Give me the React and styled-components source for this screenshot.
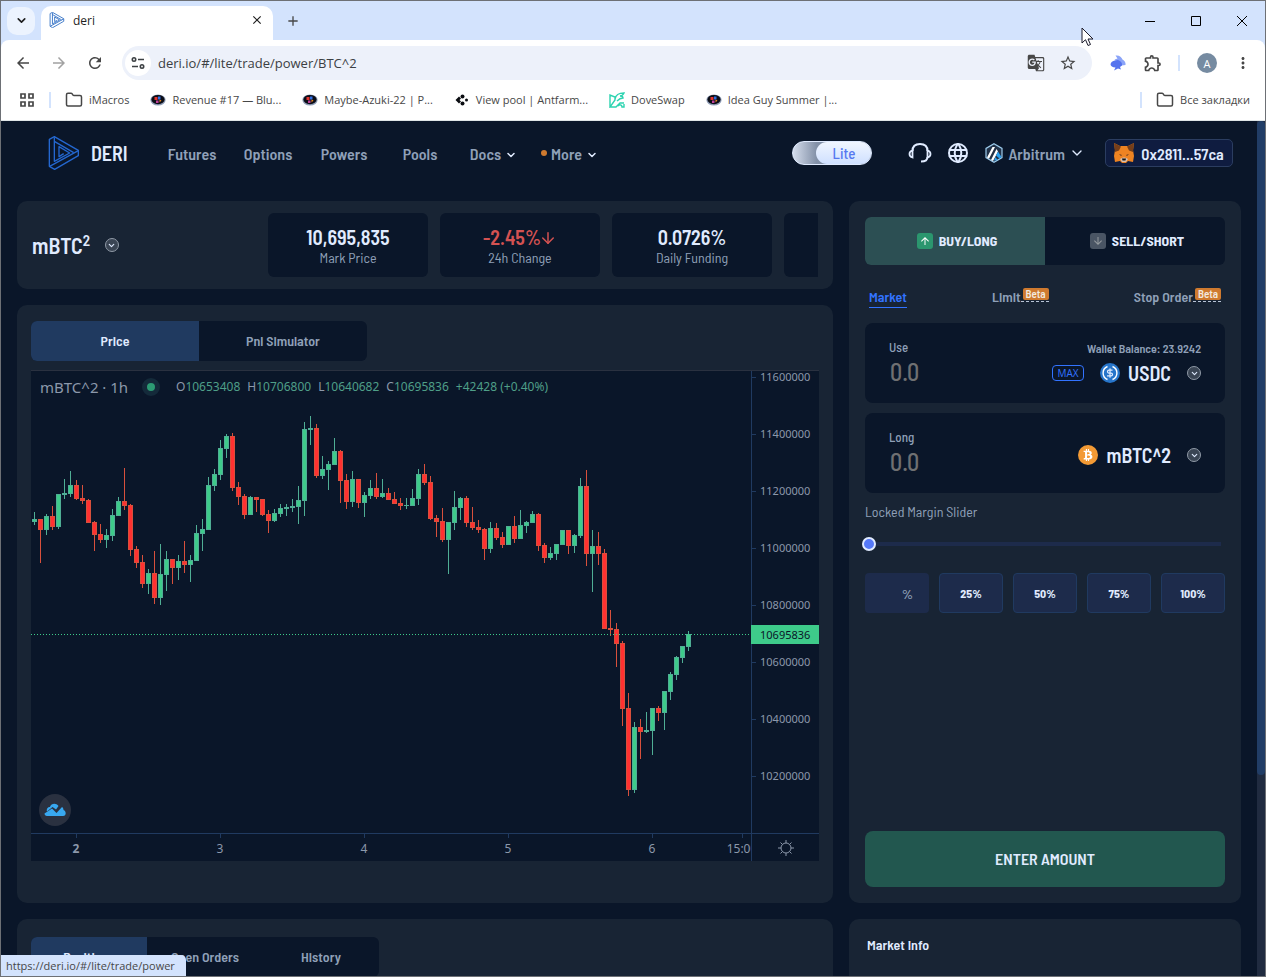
import React, { useState } from 'react'
import styled, { createGlobalStyle } from 'styled-components'
import {
  MdArrowBack, MdArrowForward, MdArrowUpward, MdArrowDownward, MdRefresh, MdStarBorder, MdGTranslate,
  MdOutlineExtension, MdMoreVert, MdClose, MdAdd,
} from 'react-icons/md'
import { TbWorld } from 'react-icons/tb'
import { FaBtc } from 'react-icons/fa'
import { ArrowDown, ChevronDown, Folder, DollarSign } from 'lucide-react'

const GlobalStyle = createGlobalStyle`
  *, *::before, *::after { box-sizing: border-box; }
  body { margin: 0; background: #0a1629; }
  button, input { font: inherit; color: inherit; }
  button { padding: 0; border: 0; background: none; cursor: pointer; }
  a { color: inherit; text-decoration: none; }
  svg { display: block; flex: none; }
`

const uiFont = '"Segoe UI", "Open Sans", "Noto Sans", sans-serif'
const appFont = '"Barlow Semi Condensed", "Roboto Condensed", "Liberation Sans Narrow", Roboto, sans-serif'
const chartFont = '"Trebuchet MS", "Noto Sans", sans-serif'

// direction, high, body top, body bottom, low - measured from the top of the plot
const candles = [
  ['u', 142, 149, 152, 155], ['d', 149, 149, 160, 193], ['u', 144, 146, 160, 165], ['d', 136, 146, 157, 160],
  ['u', 124, 124, 157, 159], ['u', 109, 123, 125, 129], ['u', 101, 115, 124, 127], ['d', 110, 115, 129, 130],
  ['d', 115, 128, 131, 134], ['d', 129, 130, 153, 153], ['d', 151, 152, 165, 181], ['d', 154, 164, 170, 173],
  ['u', 159, 165, 170, 178], ['u', 139, 145, 166, 171], ['u', 127, 131, 146, 146], ['d', 98, 131, 136, 140],
  ['d', 134, 135, 180, 186], ['d', 176, 179, 193, 198], ['d', 185, 192, 214, 218], ['u', 199, 203, 214, 224],
  ['d', 181, 203, 228, 234], ['u', 174, 204, 228, 235], ['u', 181, 189, 205, 221], ['d', 189, 189, 198, 214],
  ['u', 185, 191, 198, 210], ['d', 171, 191, 195, 203], ['u', 185, 190, 195, 212], ['u', 155, 163, 191, 191],
  ['u', 149, 159, 164, 181], ['u', 107, 115, 160, 160], ['u', 99, 104, 116, 121], ['u', 70, 78, 105, 110],
  ['u', 64, 66, 79, 88], ['d', 63, 66, 118, 121], ['d', 112, 117, 127, 135], ['d', 124, 126, 145, 149],
  ['u', 126, 127, 145, 145], ['d', 127, 127, 130, 142], ['d', 129, 129, 145, 146], ['d', 140, 144, 151, 163],
  ['u', 139, 143, 151, 152], ['u', 134, 138, 144, 147], ['u', 134, 137, 139, 146], ['u', 129, 136, 138, 142],
  ['u', 116, 130, 137, 154], ['u', 52, 59, 131, 146], ['u', 46, 58, 60, 75], ['d', 54, 58, 106, 108],
  ['u', 86, 99, 106, 109], ['u', 91, 94, 100, 120], ['u', 68, 81, 95, 95], ['d', 80, 81, 111, 133],
  ['d', 104, 110, 132, 139], ['u', 101, 109, 132, 137], ['d', 109, 109, 133, 138], ['u', 122, 125, 133, 147],
  ['u', 110, 118, 126, 129], ['d', 103, 118, 127, 129], ['u', 109, 123, 127, 128], ['d', 118, 123, 130, 130],
  ['d', 122, 129, 134, 134], ['d', 128, 133, 136, 140], ['u', 128, 135, 136, 139], ['u', 119, 128, 136, 136],
  ['u', 99, 104, 129, 135], ['d', 94, 104, 113, 115], ['d', 106, 112, 149, 150], ['d', 145, 148, 152, 167],
  ['d', 138, 151, 170, 172], ['u', 152, 152, 170, 204], ['u', 121, 137, 153, 160], ['u', 127, 128, 138, 150],
  ['d', 126, 128, 153, 157], ['d', 137, 152, 158, 160], ['d', 150, 157, 160, 163], ['d', 158, 159, 179, 190],
  ['u', 152, 158, 179, 183], ['d', 153, 158, 168, 170], ['d', 162, 167, 175, 178], ['u', 156, 156, 175, 175],
  ['d', 146, 156, 169, 173], ['u', 140, 155, 169, 169], ['u', 151, 152, 156, 163], ['u', 141, 144, 153, 153],
  ['d', 143, 144, 176, 181], ['d', 173, 175, 188, 193], ['u', 177, 183, 188, 190], ['u', 174, 174, 184, 190],
  ['u', 160, 160, 175, 175], ['d', 160, 160, 176, 184], ['u', 164, 165, 176, 183], ['u', 108, 116, 166, 168],
  ['d', 100, 116, 184, 196], ['u', 160, 176, 184, 222], ['d', 162, 176, 184, 195], ['d', 179, 183, 259, 259],
  ['d', 240, 258, 260, 266], ['d', 253, 259, 274, 297], ['d', 271, 273, 339, 356], ['d', 323, 338, 420, 426],
  ['u', 352, 357, 420, 423], ['d', 349, 357, 362, 389], ['u', 342, 360, 362, 363], ['u', 338, 338, 361, 385],
  ['d', 336, 338, 343, 351], ['u', 321, 321, 343, 360], ['u', 302, 304, 322, 330], ['u', 286, 287, 305, 310],
  ['u', 276, 276, 288, 293], ['u', 261, 264, 277, 281],
]

const prices = [11600000, 11400000, 11200000, 11000000, 10800000, 10600000, 10400000, 10200000]
const days = ['2', '3', '4', '5', '6']
const navLinks = ['Futures', 'Options', 'Powers', 'Pools']
const stats = [
  { value: '10,695,835', label: 'Mark Price' },
  { value: '-2.45%', label: '24h Change', down: true },
  { value: '0.0726%', label: 'Daily Funding' },
  { value: '', label: '' },
]
const bookmarks = [
  { icon: 'folder', text: 'iMacros' },
  { icon: 'eye', text: 'Revenue #17 — Blu...' },
  { icon: 'eye', text: 'Maybe-Azuki-22 | P...' },
  { icon: 'ant', text: 'View pool | Antfarm...' },
  { icon: 'dove', text: 'DoveSwap' },
  { icon: 'eye', text: 'Idea Guy Summer |...' },
]

/* ---------- icons ---------- */

const DeriLogo = ({ size, color, stroke = 4 }) => (
  <svg width={size} height={size} viewBox="0 0 102 102" fill="none" stroke={color} strokeWidth={stroke} strokeLinejoin="round">
    <path d="M7 10 L22 2 L94 43 V59 L23 100 L7 91 Z" />
    <path d="M22 4 V76 L68 51 L36 32 V62 L50 53" />
    <path d="M8 91 L94 44" />
    <path d="M22 16 L80 50" />
  </svg>
)

const EyeIcon = () => (
  <svg width="16" height="16" viewBox="0 0 16 16">
    <ellipse cx="8" cy="8" rx="7.6" ry="5.6" fill="#8d9bb5" />
    <ellipse cx="8" cy="7.6" rx="6.6" ry="4.6" fill="#0b0d16" />
    <path d="M4.500 5h3v3h-3z" fill="#e3342f" />
    <path d="M8 4.500h2.500v3H8z" fill="#2f6fe4" />
    <path d="M6 8.500h2.500V11H6z" fill="#c0409a" />
    <path d="M9.500 7.500l2 1-2 2z" fill="#f08a24" />
  </svg>
)

const AntIcon = () => (
  <svg width="16" height="16" viewBox="0 0 16 16" fill="#0b0d12">
    <path d="M5 4.500 7 6.500 5.500 8 7 9.500 5 11.500 1.500 8z" />
    <circle cx="8.500" cy="4.500" r="2" />
    <circle cx="8.500" cy="11.500" r="2" />
    <circle cx="12.500" cy="8" r="1.500" />
  </svg>
)

const DoveIcon = () => (
  <svg width="16" height="16" viewBox="0 0 16 16" fill="none" stroke="#2cd3b0" strokeWidth="1.400">
    <path d="M1 15V3l5 2v3l-5 7h6l4-4h4M6 7c1-5 4-6 9-6-1 2-3 3-4 3 2 0 3 1 3 2-2 0-4 1-6 3M9 14c2-2 4-1 4 1h2v-3" />
  </svg>
)

const AppsIcon = () => (
  <svg width="16" height="16" viewBox="0 0 16 16" fill="none" stroke="#474747" strokeWidth="1.700">
    <path d="M2 2h4v4H2zM10 2h4v4h-4zM2 10h4v4H2zM10 10h4v4h-4z" />
  </svg>
)

const TuneIcon = () => (
  <svg width="14" height="14" viewBox="0 0 14 14" fill="none" stroke="#3c4043" strokeWidth="1.600">
    <circle cx="3" cy="3.500" r="1.700" />
    <circle cx="11" cy="10.500" r="1.700" />
    <path d="M7 3.500h6M1 10.500h6" />
  </svg>
)

const RabbyIcon = () => (
  <svg width="16" height="16" viewBox="0 0 16 16">
    <path d="M5.500.5c4-.5 6 1.500 7 4 2 1 3.500 3 3 5.500l-4 .5-3-4-4-2 3-1z" fill="#8ba4f8" />
    <path d="M.5 9c1-3 4-4 7.500-4 3 1 4.500 3 4 5.500l-2 1.500 1 2.500-3-1-4 2 1.500-3C2.500 12.500.5 11 .5 9z" fill="#5573ee" />
  </svg>
)

const HeadsetIcon = () => (
  <svg width="24" height="22" viewBox="0 0 24 22" fill="none" stroke="#e0ebff" strokeWidth="2">
    <path d="M4.500 9C4.500 4.500 7.500 2 12 2s7.500 2.500 7.500 7" />
    <path d="M4.500 8.500C2.500 9 1.500 10 1.500 12s1 3 3 3.500zM19.500 8.500c2 .5 3 1.500 3 3.500s-1 3-3 3.500z" strokeWidth="1.800" />
    <path d="M19.500 15c0 3-2.500 4.500-6.500 4.500" />
  </svg>
)

const ArbitrumIcon = () => (
  <svg width="20" height="20" viewBox="0 0 20 20">
    <path d="M10 .8l8 4.600v9.200l-8 4.600-8-4.600V5.400z" fill="#213147" stroke="#9dcced" strokeWidth="1.200" />
    <path d="M3 14.500L8.500 4H11L5 15.800zM7 17l5.500-11 1.500 2.500L9 18z" fill="#fff" />
    <path d="M12 12.500l2-4 3.500 5.500-2 1.500zM10 17.500l1.500-3.500 2 3z" fill="#28a0f0" />
  </svg>
)

const FoxIcon = () => (
  <svg width="20" height="20" viewBox="0 0 20 20">
    <path d="M0 0l6 3h8l6-3-1 7 1 6-1 6-5-1-2 2H8l-2-2-5 1-1-6 1-6z" fill="#ee8322" />
    <path d="M0 0l7 3.500-2 4L1 9zM20 0l-7 3.500 2 4L19 9z" fill="#763e1a" />
    <path d="M5 11l3 1-1 1zM15 11l-3 1 1 1z" fill="#5a3620" />
    <path d="M6 16l3-1.500h2l3 1.500-2 3H8z" fill="#d7c1b3" />
    <path d="M8 15.500h4l-.5 2h-3z" fill="#161616" />
  </svg>
)

const UsdcIcon = () => (
  <UsdcBadge>
    <svg width="20" height="20" viewBox="0 0 20 20" fill="none" stroke="#fff" strokeWidth="1.400">
      <path d="M7.500 3.500a7 7 0 0 0 0 13M12.500 3.500a7 7 0 0 1 0 13" />
      <DollarSign x="5" y="4.500" width="10" height="11" strokeWidth="3" />
    </svg>
  </UsdcBadge>
)

const CloudIcon = () => (
  <svg width="22" height="14" viewBox="0 0 22 14">
    <path d="M3 8.500C2 6 4 3.500 6 4c1-3.500 6-4.500 8.500-1L12 6.500 8.500 4z" fill="#38a8f0" />
    <path d="M8 5.500l4.500 4.500L18 4c1.500 1 1.500 2.500 1.500 3 3 1 3 6-.5 6H3c-1.500 0-2.500-1-2.500-2.500z" fill="#38a8f0" />
  </svg>
)

const SunIcon = () => (
  <svg width="16" height="16" viewBox="0 0 16 16" fill="none" stroke="#8c98ab" strokeWidth="1">
    <circle cx="8" cy="8" r="5" />
    <path d="M8 0v3M8 13v3M0 8h3M13 8h3M2.500 2.500l2 2M11.500 11.500l2 2M2.500 13.500l2-2M11.500 4.500l2-2" />
  </svg>
)

const CursorIcon = () => (
  <svg width="13" height="20" viewBox="0 0 13 20">
    <path d="M1 1v15l3.500-3.300L7 18.500l2.500-1L7 12h5z" fill="#fff" stroke="#1b1b2b" />
  </svg>
)

/* ---------- browser frame ---------- */

const Frame = styled.div`
  position: relative;
  height: 100vh;
  display: flex;
  flex-direction: column;
  overflow: hidden;
  border: 1px solid #6d7075;
  background: #0a1629;
`
const TabStrip = styled.div`
  flex: none;
  height: 39px;
  display: flex;
  align-items: center;
  padding-left: 6px;
  background: #d3e3fd;
  color: #1f1f1f;
  font: 12px ${uiFont};
`
const TabSearch = styled.button`
  width: 28px;
  height: 28px;
  display: grid;
  place-items: center;
  border-radius: 10px;
  background: #ecf3fe;
`
const Tab = styled.div`
  align-self: flex-end;
  width: 232px;
  height: 34px;
  margin-left: 6px;
  padding: 0 9px 6px 8px;
  display: flex;
  align-items: center;
  gap: 8px;
  border-radius: 10px 10px 0 0;
  background: #fff;
  span { flex: 1; }
`
const NewTab = styled.button`
  margin-left: 12px;
  color: #474747;
`
const WindowButtons = styled.div`
  margin-left: auto;
  display: flex;
  button {
    width: 46px;
    height: 38px;
    display: grid;
    place-items: center;
  }
`
const ToolbarWrap = styled.div`
  background: #d3e3fd;
`
const Toolbar = styled.div`
  height: 46px;
  display: flex;
  align-items: center;
  padding: 0 13px;
  border-radius: 8px 8px 0 0;
  background: #fff;
  color: #474747;
`
const NavButton = styled.button`
  width: 36px;
  height: 32px;
  display: flex;
  align-items: center;
  opacity: ${(p) => (p.$faded ? 0.5 : 1)};
`
const Address = styled.div`
  flex: 1;
  height: 34px;
  display: flex;
  align-items: center;
  gap: 7px;
  padding: 0 15px 0 3px;
  border-radius: 17px;
  background: #edf1fa;
`
const SiteInfo = styled.button`
  width: 26px;
  height: 26px;
  display: grid;
  place-items: center;
  border-radius: 50%;
  background: #fff;
`
const UrlInput = styled.input`
  flex: 1;
  min-width: 0;
  padding: 0;
  border: 0;
  background: none;
  outline: none;
  font: 13px ${uiFont};
  color: #3c4043;
`
const AddressIcons = styled.div`
  display: flex;
  gap: 14px;
`
const Extensions = styled.div`
  display: flex;
  align-items: center;
  gap: 15px;
  padding-left: 18px;
  > :first-child { margin-right: 2px; }
`
const Divider = styled.span`
  width: 2px;
  height: 16px;
  background: #d3e3fd;
`
const Avatar = styled.button`
  width: 20px;
  height: 20px;
  margin: 0 2px;
  border-radius: 50%;
  background: #768ba1;
  color: #fff;
  font: 11px ${uiFont};
`
const Bookmarks = styled.nav`
  flex: none;
  height: 35px;
  display: flex;
  align-items: center;
  gap: 14px;
  padding: 0 8px 7px 18px;
  border-bottom: 1px solid #dfe5e6;
  background: #fff;
  color: #474747;
  font: 11px ${uiFont};
  a {
    display: flex;
    align-items: center;
    gap: 6px;
    margin-right: 7px;
    white-space: nowrap;
  }
`
const Spacer = styled.div`
  flex: 1;
`
const Cursor = styled.div`
  position: absolute;
  left: 1080px;
  top: 26px;
`
const StatusLink = styled.div`
  position: absolute;
  left: 0;
  bottom: 0;
  height: 21px;
  padding: 0 11px 0 5px;
  border-radius: 0 5px 0 0;
  background: #d3e3fd;
  color: #474747;
  font: 11px/21px ${uiFont};
`

/* ---------- site ---------- */

const Viewport = styled.div`
  flex: 1;
  min-height: 0;
  display: flex;
  font-family: ${appFont};
  font-weight: 600;
  color: #e0ebff;
`
const Site = styled.main`
  flex: 1;
  min-width: 0;
  padding: 0 16px;
  overflow: hidden;
`
const Scrollbar = styled.div`
  width: 8px;
  background: #202b40;
  &::before {
    content: '';
    display: block;
    height: 654px;
    border-radius: 4px;
    background: #213d66;
  }
`
const Header = styled.header`
  height: 64px;
  margin-bottom: 16px;
  padding: 0 8px 0 30px;
  display: flex;
  align-items: center;
`
const Brand = styled.a`
  width: 107px;
  display: flex;
  align-items: center;
  gap: 10px;
  font-size: 20px;
`
const Nav = styled.nav`
  display: flex;
  color: #8fa0b8;
  font-size: 16px;
`
const NavItem = styled.a`
  width: 76px;
  padding-right: ${(p) => (p.$menu ? '5px' : 0)};
  display: flex;
  align-items: center;
  justify-content: center;
  gap: 4px;
  white-space: nowrap;
  svg {
    margin-top: 3px;
    color: #e0ebff;
  }
`
const Dot = styled.span`
  width: 6px;
  height: 6px;
  border-radius: 50%;
  background: #cf7a2f;
`
const LiteSwitch = styled.button`
  width: 80px;
  height: 24px;
  display: flex;
  justify-content: flex-end;
  border: 1px solid #e0ebff;
  border-radius: 12px;
  background: linear-gradient(90deg, #d5ddec, #8391a8 30%);
  span {
    width: 55px;
    border-radius: 11px;
    background: linear-gradient(180deg, #f0f6ff, #cfe0ff);
    color: #5578f0;
    font-size: 15px;
    font-weight: 500;
    line-height: 22px;
  }
`
const HeaderRight = styled.div`
  margin-left: auto;
  display: flex;
  align-items: center;
`
const IconRow = styled.div`
  display: flex;
  align-items: center;
  gap: 14px;
  margin: 0 14px 0 36px;
`
const Network = styled.button`
  display: flex;
  align-items: center;
  gap: 4px;
  margin-right: 20px;
  color: #8fa0b8;
  font-size: 16px;
  svg:last-child { color: #e0ebff; }
`
const Wallet = styled.button`
  width: 128px;
  height: 28px;
  display: flex;
  align-items: center;
  justify-content: center;
  gap: 7px;
  border: 1px solid #2b3d60;
  border-radius: 5px;
  background: #0f1c40;
  font-size: 16px;
`
const Columns = styled.div`
  display: grid;
  grid-template-columns: minmax(0, 1fr) 392px;
  gap: 16px;
`
const LeftColumn = styled.div`
  display: flex;
  flex-direction: column;
  gap: 16px;
`
const Panel = styled.section`
  padding: 16px 14px;
  border-radius: 10px;
  background: #182434;
`
const SymbolPanel = styled(Panel)`
  height: 88px;
  padding: 12px 15px;
  display: flex;
  align-items: center;
`
const SymbolButton = styled.button`
  width: 236px;
  display: flex;
  align-items: center;
  gap: 15px;
  font-size: 22px;
  sup { font-size: 15px; line-height: 0; }
`
const Stats = styled.div`
  flex: 1;
  min-width: 0;
  display: flex;
  gap: 12px;
  overflow: hidden;
`
const Stat = styled.div`
  flex: none;
  width: 160px;
  height: 64px;
  padding-top: 13px;
  border-radius: 6px;
  background: #0a1629;
  text-align: center;
`
const StatValue = styled.div`
  display: flex;
  justify-content: center;
  align-items: center;
  font-size: 20px;
  line-height: 23px;
  color: ${(p) => (p.$down ? '#d45252' : '#e0ebff')};
  svg { margin-left: -2px; }
`
const StatLabel = styled.div`
  font-size: 14px;
  font-weight: 400;
  line-height: 18px;
  color: #8fa0b8;
`
const ChartPanel = styled(Panel)`
  flex: 1;
`
const Tabs = styled.div`
  display: inline-flex;
  vertical-align: top;
  border-radius: 6px;
  overflow: hidden;
  background: #0a1629;
`
const TabButton = styled.button`
  width: ${(p) => p.$width || 168}px;
  height: 40px;
  padding-bottom: 2px;
  font-size: 14px;
  color: ${(p) => (p.$active ? '#e0ebff' : '#8fa0b8')};
  background: ${(p) => (p.$active ? '#203a60' : 'transparent')};
`
const Chart = styled.div`
  position: relative;
  margin-top: 9px;
  display: grid;
  grid-template-columns: minmax(0, 1fr) 68px;
  grid-template-rows: 463px 27px;
  border-top: 1px solid #2a3140;
  background: #0a1629;
  font: 12px ${chartFont};
  color: #8c98ab;
`
const Plot = styled.div`
  overflow: hidden;
  border-bottom: 1px solid #203a60;
`
const PriceAxis = styled.div`
  border-left: 1px solid #203a60;
  border-bottom: 1px solid #203a60;
`
const PriceLabel = styled.div`
  height: 57px;
  display: flex;
  align-items: flex-start;
  gap: 4px;
  font-size: 11px;
  line-height: 12px;
  &::before {
    content: '';
    width: 4px;
    margin-top: 6px;
    border-top: 1px solid #203a60;
  }
`
const LastPrice = styled.div`
  position: absolute;
  right: 0;
  top: 254px;
  width: 68px;
  height: 19px;
  padding-left: 9px;
  background: #3ecb8a;
  color: #0a1629;
  font-size: 11px;
  line-height: 19px;
`
const TimeAxis = styled.div`
  display: flex;
  overflow: hidden;
  font-size: 12px;
  line-height: 30px;
  text-align: center;
`
const TimeLabel = styled.span`
  flex: none;
  width: ${(p) => p.$width || 144}px;
  margin-left: ${(p) => (p.$first ? '-27px' : 0)};
  background: linear-gradient(#203a60, #203a60) center top / 1px 4px no-repeat;
`
const AxisCorner = styled.button`
  display: grid;
  place-items: center;
  border-left: 1px solid #203a60;
`
const Legend = styled.div`
  position: absolute;
  left: 9px;
  top: 5px;
  display: flex;
  align-items: center;
  line-height: 22px;
  color: #8c98ab;
  b { font-weight: 400; color: #4f9f88; }
`
const LegendTitle = styled.span`
  width: 102px;
  font-size: 15px;
  line-height: 20px;
`
const LiveDot = styled.span`
  width: 18px;
  height: 18px;
  margin-right: 16px;
  border: 5px solid #142a3a;
  border-radius: 50%;
  background: #2c9a73;
`
const LegendValues = styled.span`
  display: flex;
  gap: 7px;
`
const CloudBadge = styled.div`
  position: absolute;
  left: 8px;
  bottom: 35px;
  width: 32px;
  height: 32px;
  display: grid;
  place-items: center;
  border-radius: 50%;
  background: #2a3140;
`
const TradePanel = styled(Panel)`
  min-height: 702px;
  padding: 16px;
  display: flex;
  flex-direction: column;
`
const SideToggle = styled.div`
  display: grid;
  grid-template-columns: 1fr 1fr;
  border-radius: 6px;
  overflow: hidden;
  background: #0a1629;
`
const SideButton = styled.button`
  height: 48px;
  display: flex;
  align-items: center;
  justify-content: center;
  gap: 6px;
  padding-left: 4px;
  font-size: 14px;
  font-weight: 700;
  line-height: 16px;
  background: ${(p) => (p.$active ? '#2c4f53' : 'transparent')};
  span {
    padding: 2px;
    border-radius: 3px;
    color: ${(p) => (p.$active ? '#fff' : '#949a9e')};
    background: ${(p) => (p.$active ? '#2b966e' : '#4a5564')};
  }
`
const OrderTypes = styled.div`
  height: 58px;
  padding: 0 4px;
  display: flex;
  align-items: center;
  justify-content: space-between;
`
const OrderType = styled.button`
  display: flex;
  padding: 7px 0 1px;
  font-size: 14px;
  line-height: 19px;
  color: ${(p) => (p.$active ? '#3273ff' : '#8fa0b8')};
  border-bottom: 1px solid ${(p) => (p.$active ? '#3273ff' : 'transparent')};
`
const Beta = styled.span`
  height: 15px;
  padding: 1px 0 0 2px;
  border-bottom: 1px dashed #b8c4d6;
  span {
    display: block;
    width: 26px;
    height: 12px;
    border-radius: 2px;
    background: #cf7a2f;
    color: #f2e9df;
    font-size: 11px;
    line-height: 12px;
  }
`
const AmountBox = styled.div`
  height: 80px;
  margin-bottom: 10px;
  padding: 0 24px;
  display: flex;
  align-items: center;
  justify-content: space-between;
  border-radius: 8px;
  background: #0a1629;
`
const Field = styled.div`
  display: flex;
  flex-direction: column;
  label {
    color: #8fa0b8;
    font-size: 13px;
    font-weight: 500;
    line-height: 16px;
  }
  input {
    width: 120px;
    height: 32px;
    padding: 0 0 0 1px;
    border: 0;
    outline: none;
    background: none;
    font-size: 24px;
    font-weight: 500;
  }
  input::placeholder { color: #6f7072; opacity: 1; }
`
const TokenSide = styled.div`
  padding-top: 4px;
  text-align: right;
`
const Balance = styled.div`
  color: #8fa0b8;
  font-size: 12px;
  line-height: 14px;
`
const TokenRow = styled.div`
  display: flex;
  align-items: center;
  justify-content: flex-end;
  gap: 16px;
  padding-top: 2px;
`
const MaxButton = styled.button`
  width: 32px;
  height: 16px;
  border: 1px solid #3273ff;
  border-radius: 4px;
  color: #3273ff;
  font: 10px/14px ${uiFont};
`
const TokenButton = styled.button`
  display: flex;
  align-items: center;
  gap: 8px;
  padding-top: ${(p) => (p.$alone ? '4px' : 0)};
  font-size: 20px;
  line-height: 32px;
  > :last-child { margin-left: 8px; }
`
const UsdcBadge = styled.span`
  border-radius: 50%;
  background: #2775ca;
`
const BtcBadge = styled.span`
  width: 20px;
  height: 20px;
  display: grid;
  place-items: center;
  border-radius: 50%;
  background: #f39a35;
`
const RoundCaret = styled.span`
  width: 14px;
  height: 14px;
  display: grid;
  place-items: center;
  border: 1px solid #8f99a6;
  border-radius: 50%;
  background: #3a4554;
`
const SliderLabel = styled.label`
  color: #8fa0b8;
  font-size: 14px;
  font-weight: 400;
  line-height: 18px;
`
const Slider = styled.input`
  appearance: none;
  height: 14px;
  margin: 16px 4px 22px -3px;
  background: linear-gradient(#1d2b4b, #1d2b4b) center / 100% 4px no-repeat;
  &::-webkit-slider-thumb {
    appearance: none;
    width: 14px;
    height: 14px;
    border: 2px solid #e0ebff;
    border-radius: 50%;
    background: #5578f8;
  }
`
const Percents = styled.div`
  display: grid;
  grid-template-columns: repeat(5, minmax(0, 1fr));
  gap: 10px;
`
const PercentButton = styled.button`
  height: 40px;
  border: 1px solid #203a60;
  border-radius: 4px;
  background: #1d2b4b;
  font-size: 12px;
  font-weight: 700;
`
const PercentInput = styled.label`
  height: 40px;
  padding-right: 16px;
  display: flex;
  align-items: center;
  border-radius: 4px;
  background: #1d2b4b;
  color: #8fa0b8;
  font-size: 14px;
  font-weight: 500;
  input {
    flex: 1;
    min-width: 0;
    border: 0;
    outline: none;
    background: none;
    text-align: right;
  }
`
const SubmitButton = styled.button`
  height: 56px;
  margin-top: auto;
  padding-bottom: 2px;
  border-radius: 8px;
  background: #22574f;
  font-size: 16px;
`
const BottomPanel = styled(Panel)`
  min-height: 160px;
  padding: 18px 14px;
`
const PanelTitle = styled.h2`
  margin: 0 4px;
  font-size: 14px;
  font-weight: 600;
  line-height: 16px;
`

const Caret = () => (
  <RoundCaret><ChevronDown size={9} strokeWidth={3} /></RoundCaret>
)

const BookmarkIcon = ({ type }) => {
  if (type === 'folder') return <Folder size={18} strokeWidth={2} />
  if (type === 'ant') return <AntIcon />
  if (type === 'dove') return <DoveIcon />
  return <EyeIcon />
}

const CandleChart = () => (
  <svg width="720" height="463" shapeRendering="crispEdges">
    {candles.map(([dir, high, top, bottom, low], i) => {
      const x = 3 + i * 6
      const edge = dir === 'u' ? '#4fae95' : '#d8503c'
      return (
        <g key={i}>
          <rect x={x} y={high - 1} width="1" height={low - high} fill={edge} />
          <rect x={x - 2} y={top - 1} width="5" height={bottom - top} fill={edge} />
          {bottom - top > 2 && (
            <rect x={x - 1} y={top} width="3" height={bottom - top - 2} fill={dir === 'u' ? '#3ecb8a' : '#ff3131'} />
          )}
        </g>
      )
    })}
    <line x1="0" x2="720" y1="263.500" y2="263.500" stroke="#3ecb8a" strokeDasharray="1 2" />
  </svg>
)

const Browser = () => (
  <>
    <TabStrip>
      <TabSearch aria-label="Search tabs"><ChevronDown size={13} strokeWidth={3} /></TabSearch>
      <Tab>
        <DeriLogo size={16} color="#3c78c8" stroke={6} />
        <span>deri</span>
        <button aria-label="Close tab"><MdClose size={14} /></button>
      </Tab>
      <NewTab aria-label="New tab"><MdAdd size={16} /></NewTab>
      <WindowButtons>
        <button aria-label="Minimize"><svg width="10" height="10"><path d="M0 5.500h10" stroke="#000" /></svg></button>
        <button aria-label="Maximize"><svg width="10" height="10"><path d="M.5.5h9v9h-9z" fill="none" stroke="#000" /></svg></button>
        <button aria-label="Close"><svg width="10" height="10"><path d="M0 0l10 10M10 0L0 10" stroke="#000" /></svg></button>
      </WindowButtons>
    </TabStrip>
    <ToolbarWrap>
      <Toolbar>
        <NavButton aria-label="Back"><MdArrowBack size={18} /></NavButton>
        <NavButton $faded aria-label="Forward"><MdArrowForward size={18} /></NavButton>
        <NavButton aria-label="Reload"><MdRefresh size={18} /></NavButton>
        <Address>
          <SiteInfo aria-label="Site information"><TuneIcon /></SiteInfo>
          <UrlInput aria-label="Address" defaultValue="deri.io/#/lite/trade/power/BTC^2" />
          <AddressIcons>
            <MdGTranslate size={18} />
            <MdStarBorder size={18} />
          </AddressIcons>
        </Address>
        <Extensions>
          <RabbyIcon />
          <MdOutlineExtension size={20} />
          <Divider />
          <Avatar>A</Avatar>
          <MdMoreVert size={18} />
        </Extensions>
      </Toolbar>
    </ToolbarWrap>
    <Bookmarks>
      <AppsIcon />
      <Divider />
      {bookmarks.map((b) => (
        <a href="#" key={b.text}><BookmarkIcon type={b.icon} />{b.text}</a>
      ))}
      <Spacer />
      <Divider />
      <a href="#"><Folder size={18} />Все закладки</a>
    </Bookmarks>
  </>
)

const SiteHeader = () => (
  <Header>
    <Brand href="#"><DeriLogo size={34} color="#2467cf" />DERI</Brand>
    <Nav>
      {navLinks.map((name) => <NavItem href="#" key={name}>{name}</NavItem>)}
      <NavItem href="#" $menu>Docs<ChevronDown size={12} strokeWidth={3} /></NavItem>
      <NavItem href="#" $menu><Dot />More<ChevronDown size={12} strokeWidth={3} /></NavItem>
    </Nav>
    <HeaderRight>
      <LiteSwitch><span>Lite</span></LiteSwitch>
      <IconRow>
        <HeadsetIcon />
        <TbWorld size={24} />
      </IconRow>
      <Network><ArbitrumIcon />Arbitrum<ChevronDown size={16} /></Network>
      <Wallet><FoxIcon />0x2811...57ca</Wallet>
    </HeaderRight>
  </Header>
)

const PriceChart = () => (
  <Chart>
    <Plot><CandleChart /></Plot>
    <PriceAxis>
      {prices.map((p) => <PriceLabel key={p}>{p}</PriceLabel>)}
    </PriceAxis>
    <TimeAxis>
      {days.map((d, i) => <TimeLabel key={d} $first={i === 0}>{d === '2' ? <b>{d}</b> : d}</TimeLabel>)}
      <TimeLabel $width={36}>15:00</TimeLabel>
    </TimeAxis>
    <AxisCorner aria-label="Chart settings"><SunIcon /></AxisCorner>
    <LastPrice>10695836</LastPrice>
    <Legend>
      <LegendTitle>mBTC^2 · 1h</LegendTitle>
      <LiveDot />
      <LegendValues>
        <span>O<b>10653408</b></span>
        <span>H<b>10706800</b></span>
        <span>L<b>10640682</b></span>
        <span>C<b>10695836</b></span>
        <b>+42428 (+0.40%)</b>
      </LegendValues>
    </Legend>
    <CloudBadge><CloudIcon /></CloudBadge>
  </Chart>
)

const TradeForm = () => {
  const [side, setSide] = useState('long')
  const [type, setType] = useState('Market')
  const [percent, setPercent] = useState('')

  return (
    <TradePanel>
      <SideToggle>
        <SideButton $active={side === 'long'} onClick={() => setSide('long')}>
          <span><MdArrowUpward size={12} /></span>BUY/LONG
        </SideButton>
        <SideButton $active={side === 'short'} onClick={() => setSide('short')}>
          <span><MdArrowDownward size={12} /></span>SELL/SHORT
        </SideButton>
      </SideToggle>
      <OrderTypes>
        {['Market', 'Limit', 'Stop Order'].map((name) => (
          <OrderType key={name} $active={type === name} onClick={() => setType(name)}>
            {name}
            {name !== 'Market' && <Beta><span>Beta</span></Beta>}
          </OrderType>
        ))}
      </OrderTypes>
      <AmountBox>
        <Field>
          <label htmlFor="use">Use</label>
          <input id="use" placeholder="0.0" />
        </Field>
        <TokenSide>
          <Balance>Wallet Balance: 23.9242</Balance>
          <TokenRow>
            <MaxButton>MAX</MaxButton>
            <TokenButton><UsdcIcon />USDC<Caret /></TokenButton>
          </TokenRow>
        </TokenSide>
      </AmountBox>
      <AmountBox>
        <Field>
          <label htmlFor="long">Long</label>
          <input id="long" placeholder="0.0" />
        </Field>
        <TokenButton $alone><BtcBadge><FaBtc size={12} color="#fff" /></BtcBadge>mBTC^2<Caret /></TokenButton>
      </AmountBox>
      <SliderLabel htmlFor="margin">Locked Margin Slider</SliderLabel>
      <Slider
        id="margin" type="range" min="0" max="100"
        value={Number(percent) || 0} onChange={(e) => setPercent(e.target.value)}
      />
      <Percents>
        <PercentInput>
          <input aria-label="Percent" value={percent} onChange={(e) => setPercent(e.target.value)} />%
        </PercentInput>
        {[25, 50, 75, 100].map((n) => (
          <PercentButton key={n} onClick={() => setPercent(String(n))}>{n}%</PercentButton>
        ))}
      </Percents>
      <SubmitButton>ENTER AMOUNT</SubmitButton>
    </TradePanel>
  )
}

const App = () => {
  const [tab, setTab] = useState('Price')

  return (
    <Frame>
      <GlobalStyle />
      <Browser />
      <Viewport>
        <Site>
          <SiteHeader />
          <Columns>
            <LeftColumn>
              <SymbolPanel>
                <SymbolButton><span>mBTC<sup>2</sup></span><Caret /></SymbolButton>
                <Stats>
                  {stats.map((s) => (
                    <Stat key={s.label}>
                      <StatValue $down={s.down}>{s.value}{s.down && <ArrowDown size={18} strokeWidth={2} />}</StatValue>
                      <StatLabel>{s.label}</StatLabel>
                    </Stat>
                  ))}
                </Stats>
              </SymbolPanel>
              <ChartPanel>
                <Tabs>
                  {['Price', 'Pnl Simulator'].map((name) => (
                    <TabButton key={name} $active={tab === name} onClick={() => setTab(name)}>{name}</TabButton>
                  ))}
                </Tabs>
                <PriceChart />
              </ChartPanel>
            </LeftColumn>
            <TradeForm />
            <BottomPanel>
              <Tabs>
                <TabButton $width={116} $active>Positions</TabButton>
                <TabButton $width={116}>Open Orders</TabButton>
                <TabButton $width={116}>History</TabButton>
              </Tabs>
            </BottomPanel>
            <BottomPanel><PanelTitle>Market Info</PanelTitle></BottomPanel>
          </Columns>
        </Site>
        <Scrollbar />
      </Viewport>
      <StatusLink>https://deri.io/#/lite/trade/power</StatusLink>
      <Cursor><CursorIcon /></Cursor>
    </Frame>
  )
}

export default App
